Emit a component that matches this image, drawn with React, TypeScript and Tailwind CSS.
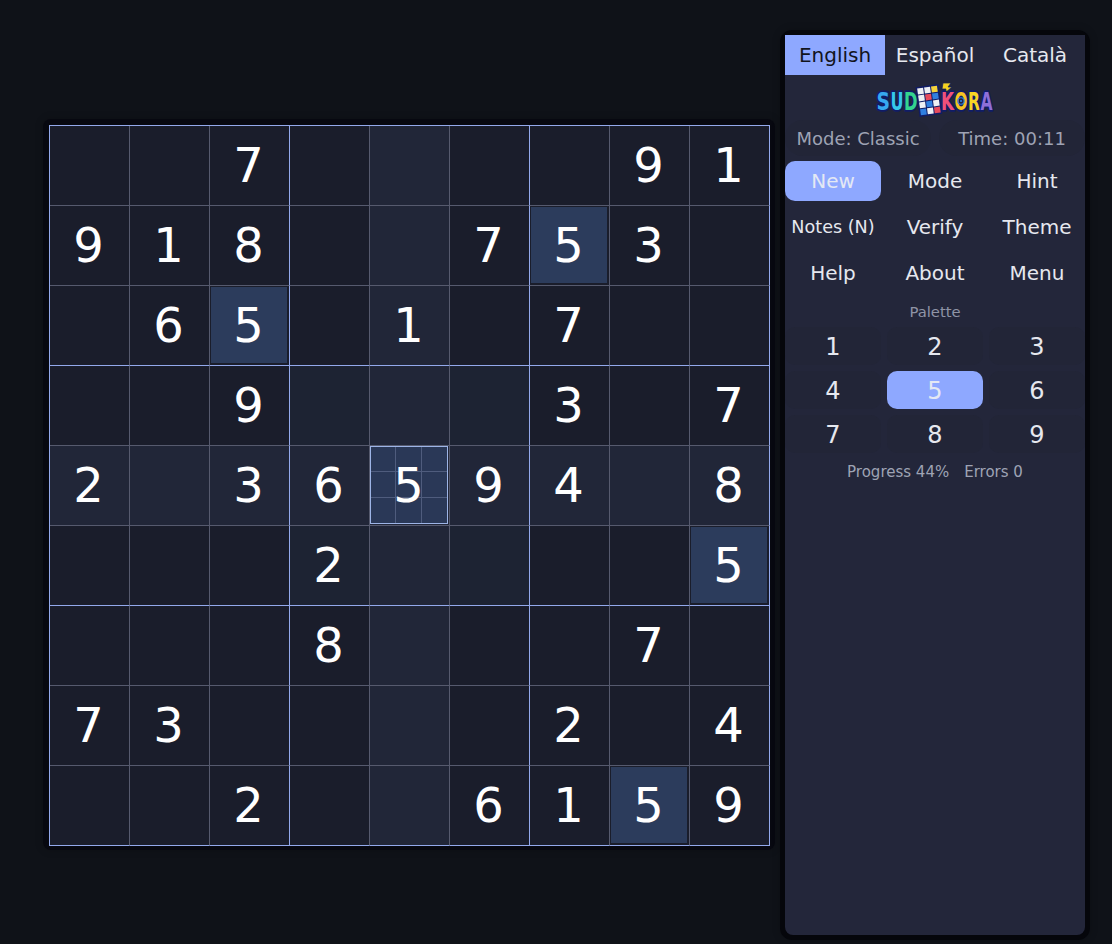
const ROWS = [
  '007000091',
  '918007530',
  '065010700',
  '009000307',
  '203659408',
  '000200005',
  '000800070',
  '730000204',
  '002006159',
];

function Cell({ value, r, c }: { value: string; r: number; c: number }) {
  const selected = r === 4 && c === 4;
  const same = value === '5' && !selected;
  const line = r === 4 || c === 4;
  const box = r >= 3 && r <= 5 && c >= 3 && c <= 5;
  const right = c === 2 || c === 5 || c === 8;
  const bottom = r === 2 || r === 5 || r === 8;
  return (
    <div
      className={`relative flex h-[80px] w-[80px] items-center justify-center border-r border-b p-px ${
        right ? 'border-r-[#93a9ec]' : 'border-r-[#565a6e]'
      } ${bottom ? 'border-b-[#93a9ec]' : 'border-b-[#565a6e]'} ${
        line ? 'bg-[#212638]' : box ? 'bg-[#1d2333]' : 'bg-[#1a1d2b]'
      }`}
    >
      {same && <div className="absolute top-px left-px h-[76px] w-[76px] bg-[#2c3c5c]" />}
      {selected && (
        <div className="absolute top-0 left-0 grid h-[78px] w-[78px] grid-cols-3 grid-rows-3 border border-[#9db4e6] bg-[#2a3857]">
          {Array.from({ length: 9 }, (_, i) => (
            <div
              key={i}
              className={`${i % 3 < 2 ? 'border-r' : ''} ${i < 6 ? 'border-b' : ''} border-[#4f5c7d]`}
            />
          ))}
        </div>
      )}
      {value !== '0' && <span className="relative -translate-x-px -translate-y-px text-[48px] leading-none text-white">{value}</span>}
    </div>
  );
}

function Btn({ label, active, small }: { label: string; active?: boolean; small?: boolean }) {
  return (
    <div
      className={`flex h-[40px] items-center justify-center rounded-[10px] ${small ? 'text-[17.6px]' : 'text-[20px]'} ${
        active ? 'bg-[#8ea8ff] text-[#e4e8f4]' : 'text-[#e6e8ef]'
      }`}
    >
      {label}
    </div>
  );
}

function Logo() {
  const letters: [string, number, number, string][] = [
    ['S', 2.5, 13.5, '#36a8f0'],
    ['U', 16.5, 13, '#36c8ea'],
    ['D', 30, 13.5, '#34d48e'],
    ['K', 67, 13, '#f0507a'],
    ['O', 80.5, 13, '#f6c222'],
    ['R', 94, 12, '#f8d425'],
    ['A', 106.5, 12, '#8f6fd8'],
  ];
  const cells = [
    [45, 6, '#eef0f4'], [52, 6, '#eef0f4'], [59, 6, '#f4d23a'],
    [45, 13, '#eef0f4'], [52, 13, '#e84a5c'], [59, 13, '#2f7fe0'],
    [45, 20, '#eef0f4'], [52, 20, '#2f7fe0'], [59, 20, '#eef0f4'],
    [45, 27, '#2f7fe0'], [52, 27, '#eef0f4'], [59, 27, '#e84a5c'],
  ] as const;
  return (
    <svg width="122" height="36" viewBox="0 0 122 36" className="block">
      <g transform="rotate(-8 55 18) translate(0 -2)">
        <rect x="43.5" y="4.5" width="23" height="30" fill="#101c66" />
        {cells.map(([x, y, f], i) => (
          <rect key={i} x={x} y={y} width="6" height="6" fill={f} />
        ))}
      </g>
      <path d="M69 0 L77 0 L74 4 L78 4 L71 10 L72 6 L68 6 Z" fill="#f6d320" stroke="#101c66" strokeWidth="0.7" />
      <g fontFamily="'DejaVu Sans', sans-serif" fontWeight="700" strokeLinejoin="round" transform="scale(1 1.4)">
        {letters.map(([t, x, w, col]) => (
          <text
            key={t}
            x={x}
            y={19.5}
            fontSize="18"
            textLength={w}
            lengthAdjust="spacingAndGlyphs"
            stroke="#101c66"
            strokeWidth="2.6"
            fill={col}
            paintOrder="stroke"
          >
            {t}
          </text>
        ))}
      </g>
      <circle cx="87" cy="18" r="3.2" fill="none" stroke="#2f7fe0" strokeWidth="1.1" />
      <circle cx="87" cy="18" r="1.1" fill="#2f7fe0" />
    </svg>
  );
}

export default function App() {
  return (
    <div className="flex h-[944px] w-[1112px] items-start overflow-hidden bg-[#0f1218] pt-[30px] pl-[43px] font-['DejaVu_Sans',sans-serif]">
      <div className="mt-[89px] rounded-[8px] bg-[#070810] pt-[6px] pr-[5px] pb-[4px] pl-[6px] shadow-[0_0_8px_rgba(0,0,0,0.2)]">
        <div className="grid w-[721px] grid-cols-[repeat(9,80px)] border-t border-l border-t-[#93a9ec] border-l-[#93a9ec]">
          {ROWS.flatMap((row, r) =>
            row.split('').map((v, c) => <Cell key={`${r}-${c}`} value={v} r={r} c={c} />),
          )}
        </div>
      </div>

      <div className="ml-[5px] rounded-[12px] bg-[#05060b] p-[5px] shadow-[0_0_8px_rgba(0,0,0,0.2)]">
        <aside className="flex h-[900px] w-[300px] flex-col rounded-b-[8px] bg-[#23263a]">
          <div className="grid h-[40px] grid-cols-3 text-[20px]">
            <div className="flex items-center justify-center bg-[#8ea8ff] text-[#12141c]">English</div>
            <div className="flex items-center justify-center text-[#e6e8ef]">Español</div>
            <div className="flex items-center justify-center text-[#e6e8ef]">Català</div>
          </div>
          <div className="flex h-[45px] justify-center pt-[8px]">
            <Logo />
          </div>
          <div className="grid h-[36px] grid-cols-2 gap-[8px] text-[18px] text-[#9ea3b4]">
            <span className="flex items-center justify-center rounded-[18px] bg-[#222537]">Mode: Classic</span>
            <span className="flex items-center justify-center rounded-[18px] bg-[#222537]">Time: 00:11</span>
          </div>
          <div className="mt-[5px] grid grid-cols-3 gap-[6px]">
            <Btn label="New" active />
            <Btn label="Mode" />
            <Btn label="Hint" />
            <Btn label="Notes (N)" small />
            <Btn label="Verify" />
            <Btn label="Theme" />
            <Btn label="Help" />
            <Btn label="About" />
            <Btn label="Menu" />
          </div>
          <div className="mt-[9px] flex h-[20px] items-center justify-center text-[14.8px] text-[#8f94a6]">Palette</div>
          <div className="mt-[5px] grid grid-cols-3 gap-[6px]">
            {['1', '2', '3', '4', '5', '6', '7', '8', '9'].map((n) => (
              <div
                key={n}
                className={`flex h-[38px] items-center justify-center rounded-[10px] pt-px text-[24px] ${
                  n === '5' ? 'bg-[#8ea8ff] text-[#e4e8f4]' : 'bg-[#222537] text-[#e6e8ef]'
                }`}
              >
                {n}
              </div>
            ))}
          </div>
          <div className="mt-[9px] flex h-[20px] items-center justify-center gap-[15px] text-[15px] text-[#9ea3b4]">
            <span>Progress 44%</span>
            <span>Errors 0</span>
          </div>
        </aside>
      </div>
    </div>
  );
}
